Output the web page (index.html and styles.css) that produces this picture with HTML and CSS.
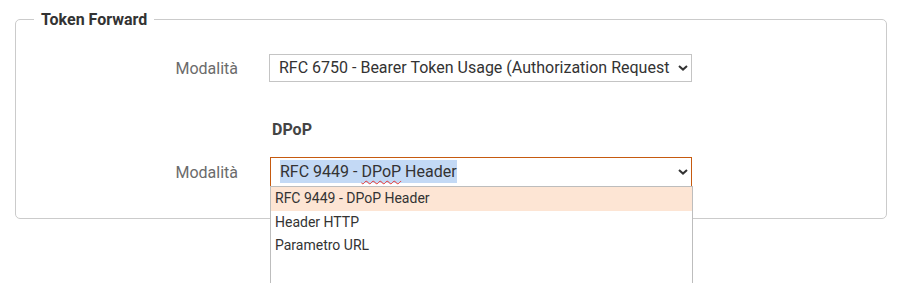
FILE: index.html
```html
<!DOCTYPE html>
<html>
<head>
    <title>Token Forward</title>
    <link rel="stylesheet" href="styles.css">
</head>
<body>
    <div class="section">
        <div class="section-title">Token Forward</div>

        <div class="section-body">
            <div class="form-row">
                <label class="form-label">Modalità</label>
                <div class="select">
                    <span class="select-value">RFC 6750 - Bearer Token Usage (Authorization Request</span>
                    <svg class="chevron" width="10" height="6" viewBox="0 0 10 6"><path d="M1 1 L5 4.6 L9 1" fill="none" stroke="#333" stroke-width="2"/></svg>
                </div>
            </div>

            <div class="form-row">
                <span></span>
                <h4 class="subtitle">DPoP</h4>
            </div>

            <div class="form-row">
                <label class="form-label">Modalità</label>
                <div class="select select-open">
                    <span class="select-value"><span class="selected-text">RFC 9449 - <span class="misspelled">DPoP</span> Header</span></span>
                    <svg class="chevron" width="10" height="6" viewBox="0 0 10 6"><path d="M1 1 L5 4.6 L9 1" fill="none" stroke="#333" stroke-width="2"/></svg>
                    <ul class="dropdown">
                        <li class="active">RFC 9449 - DPoP Header</li>
                        <li>Header HTTP</li>
                        <li>Parametro URL</li>
                    </ul>
                </div>
            </div>
        </div>
    </div>
</body>
</html>
```

FILE: styles.css
```css
html, body {
    height: 100%;
    overflow: hidden;
}
body {
    font-family: Roboto, "Liberation Sans", sans-serif;
    margin: 0;
    padding: 19px 15px 0;
    box-sizing: border-box;
    background-color: #fff;
}
.section {
    box-sizing: border-box;
    width: 872px;
    padding: 0 0 31px;
    border: 1px solid #cbcbcb;
    border-radius: 5px;
}
.section-title {
    width: fit-content;
    margin: -10px 0 0 18px;
    padding: 0 7px;
    background-color: #fff;
    font-size: 16px;
    font-weight: 700;
    line-height: 19px;
    color: #333;
}
.section-body {
    padding-top: 25px;
}
.form-row {
    display: grid;
    grid-template-columns: 222px 423px;
    column-gap: 31px;
    align-items: center;
}
.form-label {
    text-align: right;
    font-size: 16px;
    color: #6b6b6b;
}
.subtitle {
    margin: 39px 0 18px 3px;
    font-size: 16px;
    font-weight: 700;
    line-height: 18px;
    color: #444;
}
.select {
    position: relative;
    box-sizing: border-box;
    height: 28px;
    display: flex;
    align-items: center;
    padding: 0 3px 0 9px;
    border: 1px solid #c4c4c4;
    background-color: #fff;
    font-size: 16px;
    color: #333;
}
.select-value {
    flex: 1;
    overflow: hidden;
    white-space: nowrap;
    line-height: 26px;
}
.chevron {
    flex: none;
}
.select-open {
    height: 30px;
    margin-left: 1px;
    border-color: #c65a0f;
}
.selected-text {
    background-color: #c3d9f5;
    padding: 2px 0;
}
.misspelled {
    text-decoration: underline wavy #e5312e;
    text-decoration-thickness: 1px;
    text-underline-offset: 3px;
    text-decoration-skip-ink: none;
}
.dropdown {
    position: absolute;
    z-index: 2;
    top: 100%;
    left: -1px;
    width: 423px;
    height: 110px;
    box-sizing: border-box;
    margin: 0;
    padding: 0;
    list-style: none;
    border: 1px solid #bdbdbd;
    background-color: #fff;
    font-size: 14px;
    color: #333;
}
.dropdown li {
    padding: 0 4px;
    line-height: 23.5px;
}
.dropdown li.active {
    background-color: #fde5d4;
}
```
